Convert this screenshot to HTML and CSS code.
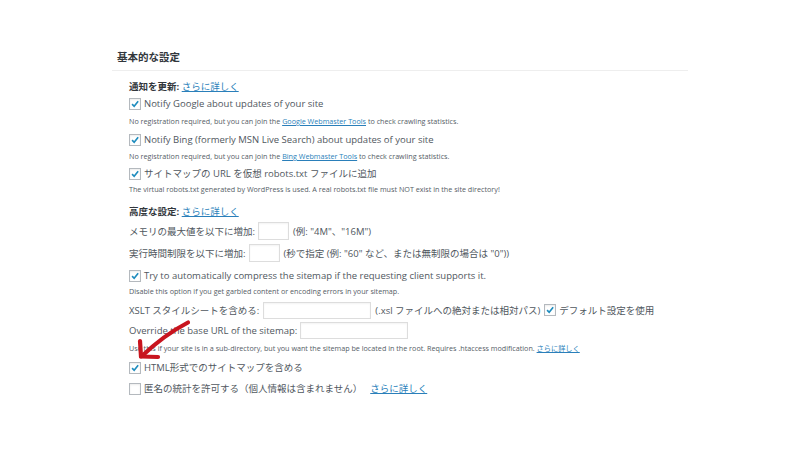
FILE: index.html
```html
<!DOCTYPE html>
<html lang="ja">
<head>
<meta charset="utf-8">
<link rel="stylesheet" href="styles.css">
</head>
<body>
<div class="panel">
  <h3 class="title">基本的な設定</h3>
  <div class="content">
    <div class="label mt8"><b>通知を更新:</b> <a href="#">さらに詳しく</a></div>

    <label class="check mt1"><span class="box on"><svg viewBox="0 0 12 12"><path d="M2.5 6.2 L5 8.8 L9.8 2.8"/></svg></span>Notify Google about updates of your site</label>
    <div class="desc mt3">No registration required, but you can join the <a href="#">Google Webmaster Tools</a> to check crawling statistics.</div>

    <label class="check mt5"><span class="box on"><svg viewBox="0 0 12 12"><path d="M2.5 6.2 L5 8.8 L9.8 2.8"/></svg></span>Notify Bing (formerly MSN Live Search) about updates of your site</label>
    <div class="desc mt2">No registration required, but you can join the <a href="#">Bing Webmaster Tools</a> to check crawling statistics.</div>

    <label class="check mt4"><span class="box on"><svg viewBox="0 0 12 12"><path d="M2.5 6.2 L5 8.8 L9.8 2.8"/></svg></span>サイトマップの URL を仮想 robots.txt ファイルに追加</label>
    <div class="desc mt1">The virtual robots.txt generated by WordPress is used. A real robots.txt file must NOT exist in the site directory!</div>

    <div class="label mt9"><b>高度な設定:</b> <a href="#">さらに詳しく</a></div>

    <div class="field mt1">メモリの最大値を以下に増加:<span class="input small"></span>(例: "4M"、"16M")</div>
    <div class="field mt2">実行時間制限を以下に増加:<span class="input small"></span>(秒で指定 (例: "60" など、または無制限の場合は "0"))</div>

    <label class="check mt5"><span class="box on"><svg viewBox="0 0 12 12"><path d="M2.5 6.2 L5 8.8 L9.8 2.8"/></svg></span>Try to automatically compress the sitemap if the requesting client supports it.</label>
    <div class="desc mt1">Disable this option if you get garbled content or encoding errors in your sitemap.</div>

    <div class="field mt3">XSLT スタイルシートを含める:<span class="input wide xslt"></span>(.xsl ファイルへの絶対または相対パス)<span class="box on inline"><svg viewBox="0 0 12 12"><path d="M2.5 6.2 L5 8.8 L9.8 2.8"/></svg></span>デフォルト設定を使用</div>
    <div class="field short mt1">Override the base URL of the sitemap:<span class="input wide"></span></div>
    <div class="desc mt3">Use this if your site is in a sub-directory, but you want the sitemap be located in the root. Requires .htaccess modification. <a href="#">さらに詳しく</a></div>

    <label class="check mt6"><span class="box on"><svg viewBox="0 0 12 12"><path d="M2.5 6.2 L5 8.8 L9.8 2.8"/></svg></span>HTML形式でのサイトマップを含める</label>
    <label class="check mt5"><span class="box"></span>匿名の統計を許可する（個人情報は含まれません）<a class="gap" href="#">さらに詳しく</a></label>
  </div>
</div>
<svg class="arrow" viewBox="0 0 70 45" width="70" height="45">
  <path d="M58 4.5 Q 34 17 12 38" />
  <path d="M11 38.5 L 10 23" />
  <path d="M11 38.5 L 28 39" />
</svg>
</body>
</html>
```

FILE: styles.css
```css
html, body {
  margin: 0;
  padding: 0;
  background: #ffffff;
}
body {
  font-family: "Open Sans", "Noto Sans CJK JP", sans-serif;
  font-size: 9.5px;
  color: #50575e;
  position: relative;
  width: 800px;
  height: 450px;
  overflow: hidden;
}
a {
  color: #2a7fba;
  text-decoration: underline;
}
.panel {
  width: 576px;
  margin-left: 112px;
}
.title {
  margin: 0;
  padding: 50px 0 6px 5px;
  font-size: 10.5px;
  line-height: 14px;
  font-weight: bold;
  color: #32373c;
  border-bottom: 1px solid #eeeeee;
}
.content {
  padding-left: 17px;
}
.label {
  line-height: 16px;
}
.label b {
  color: #32373c;
}
.check {
  display: flex;
  align-items: center;
  line-height: 16px;
  height: 16px;
  white-space: nowrap;
}
.box {
  box-sizing: border-box;
  width: 12px;
  height: 12px;
  border: 1px solid #b4b9be;
  background: #fff;
  box-shadow: inset 0 1px 2px rgba(0,0,0,0.08);
  margin-right: 3px;
  flex: none;
  display: inline-flex;
}
.box svg {
  width: 10px;
  height: 10px;
  fill: none;
  stroke: #1e8cbe;
  stroke-width: 2;
}
.box.inline {
  margin-left: 4px;
}
.desc {
  font-size: 7.2px;
  line-height: 12px;
  color: #555d66;
  white-space: nowrap;
}
.field {
  display: flex;
  align-items: center;
  height: 20px;
  white-space: nowrap;
}
.field.short {
  height: 18px;
}
.input {
  box-sizing: border-box;
  display: inline-block;
  border: 1px solid #dddddd;
  box-shadow: inset 0 1px 2px rgba(0,0,0,0.05);
  background: #fff;
  margin: 0 4px 0 3px;
  flex: none;
}
.input.small {
  width: 31px;
  height: 18px;
}
.input.wide {
  width: 108px;
  height: 17px;
}
.input.xslt {
  margin-left: 4px;
}
.gap {
  margin-left: 8px;
}
.mt1 { margin-top: 1px; }
.mt2 { margin-top: 2px; }
.mt3 { margin-top: 3px; }
.mt4 { margin-top: 4px; }
.mt5 { margin-top: 5px; }
.mt6 { margin-top: 6px; }
.mt8 { margin-top: 8px; }
.mt9 { margin-top: 9px; }
.arrow {
  position: absolute;
  left: 130px;
  top: 318px;
  fill: none;
  stroke: #c8141e;
  stroke-width: 4.2;
  stroke-linecap: round;
}
```
